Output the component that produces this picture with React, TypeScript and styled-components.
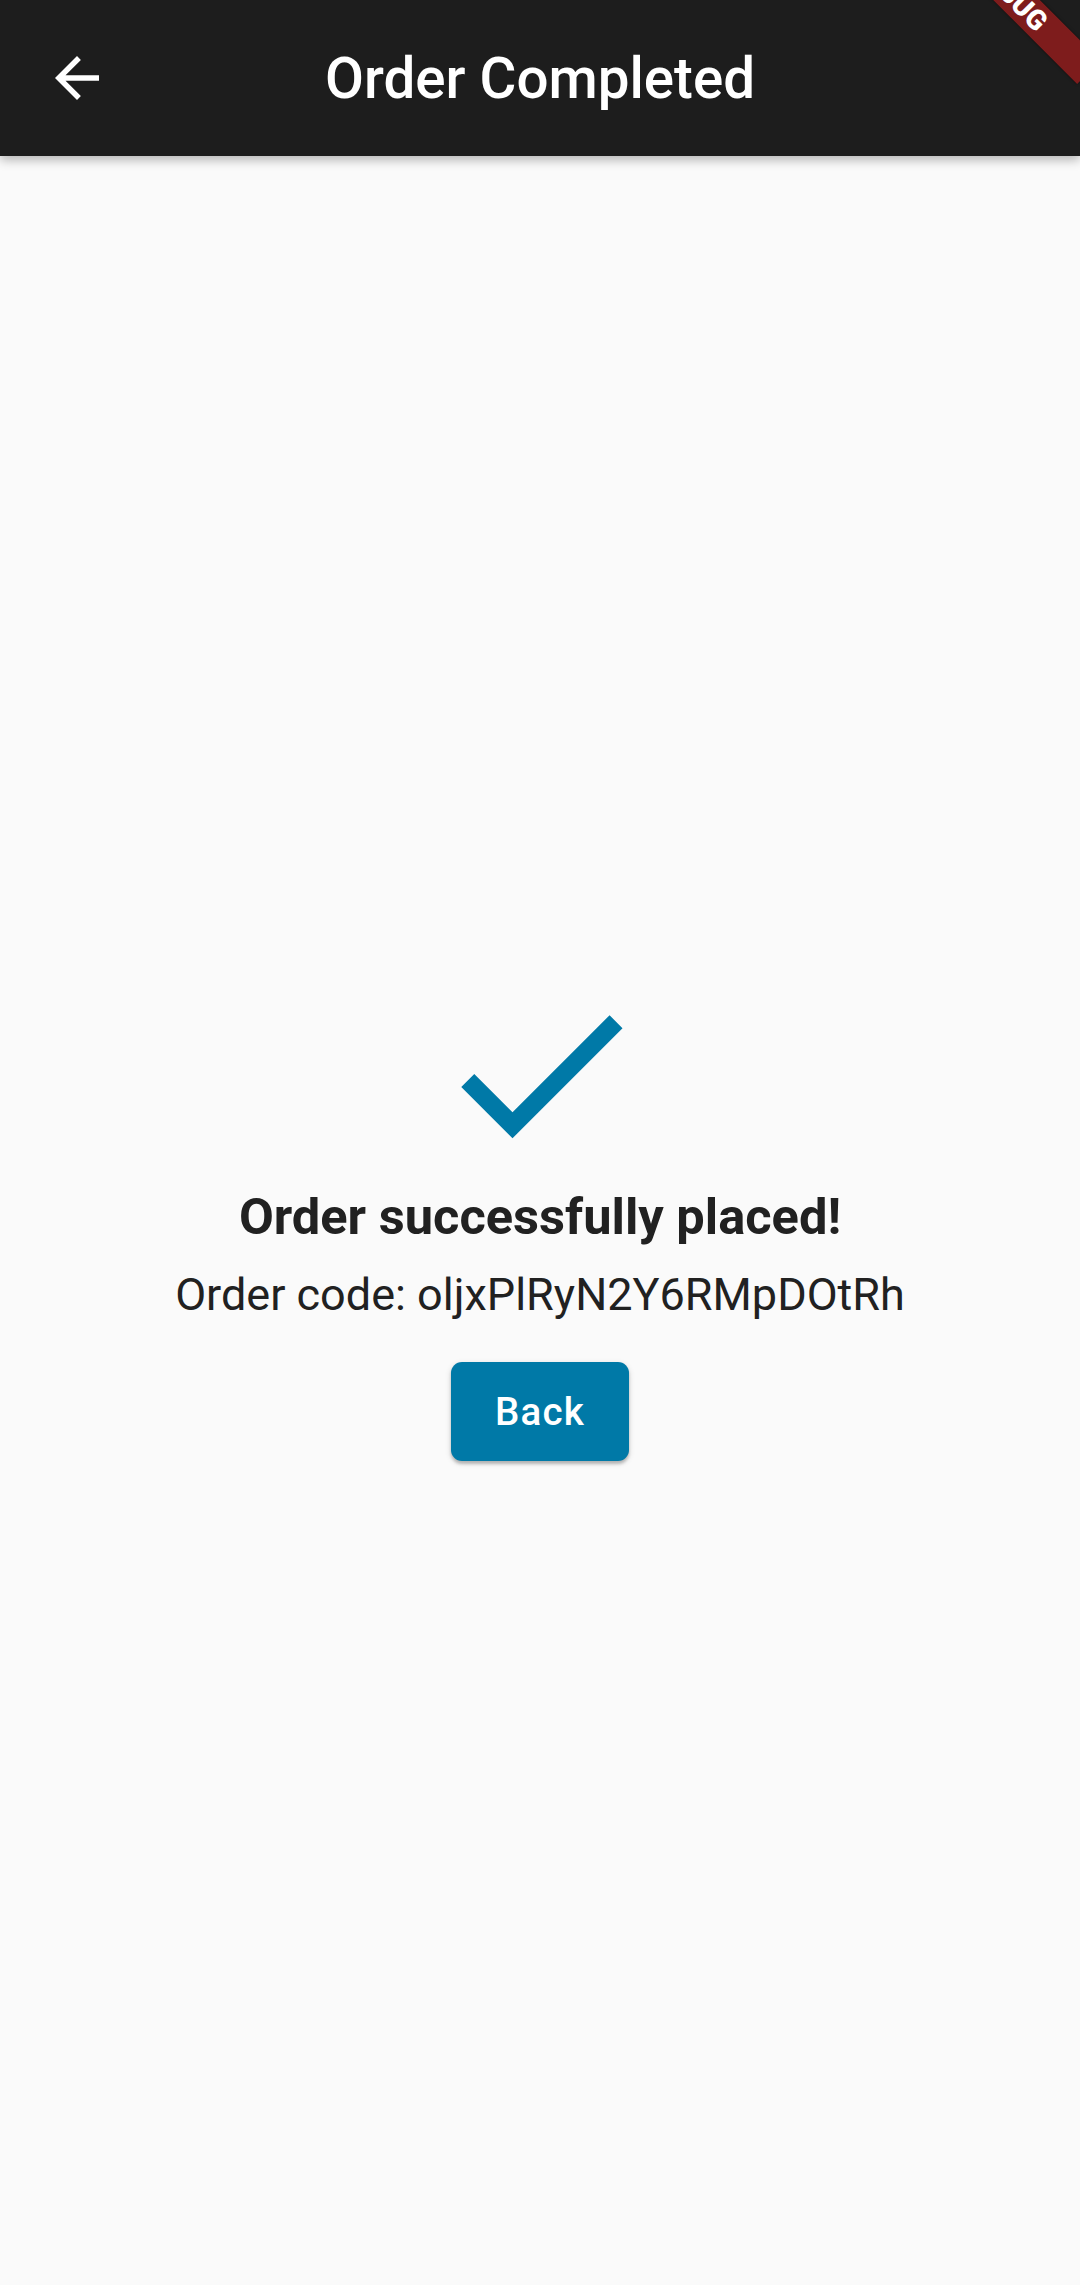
import styled, { createGlobalStyle } from "styled-components";

const GlobalStyle = createGlobalStyle`
  html, body {
    margin: 0;
    padding: 0;
    background-color: #fafafa;
    font-family: Roboto, "Liberation Sans", sans-serif;
    overflow: hidden;
  }
`;

const Screen = styled.div`
  position: relative;
  display: flex;
  flex-direction: column;
  width: 1080px;
  height: 2285px;
  overflow: hidden;
  background-color: #fafafa;
`;

const AppBar = styled.header`
  display: grid;
  grid-template-columns: 154px 1fr 154px;
  align-items: center;
  height: 156px;
  background-color: #1d1d1d;
  box-shadow: 0 4px 10px rgba(0, 0, 0, 0.28);
  z-index: 1;
`;

const BackButton = styled.button`
  display: flex;
  align-items: center;
  justify-content: center;
  width: 154px;
  height: 156px;
  padding: 0;
  border: none;
  background: none;
  color: #ffffff;
`;

const Title = styled.h1`
  margin: 2px 0 0;
  text-align: center;
  font-size: 56.5px;
  font-weight: 500;
  color: #ffffff;
`;

const Body = styled.main`
  flex: 1;
  display: flex;
  flex-direction: column;
  align-items: center;
  justify-content: center;
`;

const Heading = styled.p`
  margin: 3px 0 0;
  font-size: 50.6px;
  line-height: 1.17;
  font-weight: 700;
  color: #212121;
`;

const Code = styled.p`
  margin: 23px 0 0;
  font-size: 45px;
  line-height: 1.17;
  font-weight: 400;
  color: #212121;
`;

const Button = styled.button`
  margin: 41px 0 16px;
  height: 99px;
  padding: 0 44px;
  border: none;
  border-radius: 11px;
  background-color: #0079a7;
  color: #ffffff;
  font-family: Roboto, "Liberation Sans", sans-serif;
  font-size: 38.5px;
  font-weight: 500;
  letter-spacing: 1.2px;
  box-shadow: 0 3px 3px rgba(0, 0, 0, 0.2), 0 2px 6px rgba(0, 0, 0, 0.14);
`;

const DebugBanner = styled.div`
  position: absolute;
  left: 901px;
  top: -22px;
  width: 220px;
  height: 33px;
  transform: rotate(45deg);
  background-color: rgba(183, 28, 28, 0.63);
  box-shadow: 0 0 3px rgba(0, 0, 0, 0.5);
  color: #ffffff;
  font-size: 28px;
  font-weight: 900;
  line-height: 33px;
  text-align: center;
  z-index: 2;
`;

const ArrowBack = () => (
  <svg width="66" height="66" viewBox="0 0 24 24" fill="currentColor">
    <path d="M20 11H7.83l5.59-5.59L12 4l-8 8 8 8 1.41-1.41L7.83 13H20v-2z" />
  </svg>
);

const CheckMark = () => (
  <svg width="220" height="220" viewBox="0 0 24 24" fill="#0079a7">
    <path d="M9 16.17L4.83 12l-1.42 1.41L9 19 21 7l-1.41-1.41z" />
  </svg>
);

export default function App() {
  return (
    <Screen>
      <GlobalStyle />
      <AppBar>
        <BackButton aria-label="Back">
          <ArrowBack />
        </BackButton>
        <Title>Order Completed</Title>
        <span />
      </AppBar>

      <Body>
        <CheckMark />
        <Heading>Order successfully placed!</Heading>
        <Code>Order code: oljxPlRyN2Y6RMpDOtRh</Code>
        <Button>Back</Button>
      </Body>

      <DebugBanner>DEBUG</DebugBanner>
    </Screen>
  );
}
